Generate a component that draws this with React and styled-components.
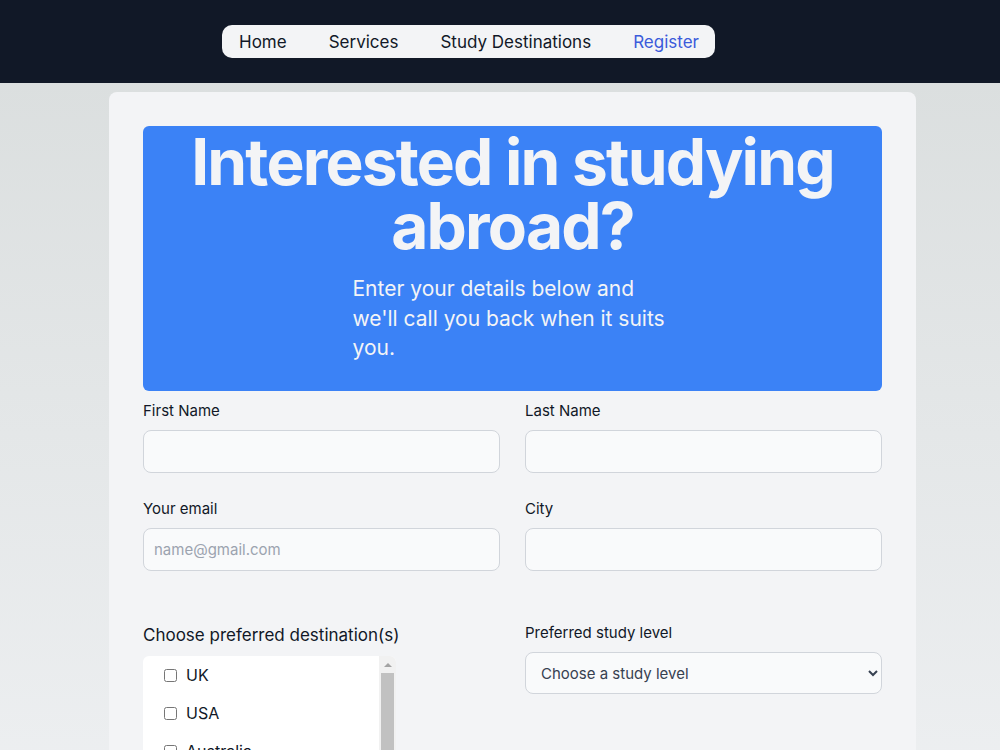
import React from 'react';
import styled, { createGlobalStyle } from 'styled-components';

const GlobalStyle = createGlobalStyle`
  html, body {
    margin: 0;
    padding: 0;
  }
  body {
    font-family: Inter, "Noto Sans", sans-serif;
    min-height: 750px;
    background: linear-gradient(180deg, #d9dddd 0%, #eef0f2 100%);
  }
`;

const Header = styled.header`
  height: 83px;
  background-color: #111827;
  display: flex;
  justify-content: center;
  align-items: flex-start;
  padding-top: 25px;
  box-sizing: border-box;
`;

const NavPill = styled.nav`
  display: flex;
  align-items: center;
  gap: 42px;
  height: 33px;
  padding: 0 16px 0 17px;
  margin-right: 63px;
  background-color: #f3f4f6;
  border-radius: 10px;
`;

const NavLink = styled.a`
  font-size: 17px;
  color: ${p => (p.$active ? '#3b5bdb' : '#111827')};
  text-decoration: none;
  cursor: pointer;
`;

const Main = styled.main`
  display: flex;
  justify-content: center;
  padding-top: 9px;
`;

const Card = styled.section`
  width: 807px;
  margin-left: 25px;
  background-color: #f3f4f6;
  border-radius: 8px;
  padding: 34px 34px 40px;
  box-sizing: border-box;
  min-height: 700px;
`;

const Banner = styled.div`
  background-color: #3b82f6;
  border-radius: 6px;
  height: 265px;
  padding-top: 4px;
  box-sizing: border-box;
  color: #f3f4f6;
`;

const Title = styled.h1`
  margin: 0;
  font-size: 64px;
  line-height: 64px;
  font-weight: 700;
  letter-spacing: -1.8px;
  text-align: center;
`;

const Lead = styled.p`
  margin: 16px auto 0;
  max-width: 320px;
  font-size: 21px;
  line-height: 29.5px;
`;

const FormGrid = styled.div`
  display: grid;
  grid-template-columns: 1fr 1fr;
  column-gap: 25px;
  row-gap: 26px;
  margin-top: 10px;
`;

const Field = styled.div`
  display: flex;
  flex-direction: column;
  margin-top: ${p => p.$top || 0}px;
`;

const Label = styled.label`
  font-size: ${p => p.$size || 15}px;
  line-height: 20px;
  color: #111827;
  margin-bottom: ${p => p.$gap || 9}px;
`;

const Input = styled.input`
  height: 43px;
  box-sizing: border-box;
  border: 1px solid #d1d5db;
  border-radius: 8px;
  background-color: #f9fafb;
  padding: 0 10px;
  font-family: inherit;
  font-size: 15px;
  color: #111827;
  outline: none;

  &::placeholder {
    color: #9ca3af;
  }
`;

const Select = styled.select`
  height: 42px;
  box-sizing: border-box;
  border: 1px solid #d1d5db;
  border-radius: 8px;
  background-color: #f9fafb;
  padding: 0 10px 0 11px;
  font-family: inherit;
  font-size: 15px;
  color: #374151;
  outline: none;
`;

const CheckBox = styled.div`
  display: flex;
  width: 253px;
  height: 130px;
  background-color: #ffffff;
  border-radius: 6px 6px 0 0;
  overflow: hidden;
`;

const CheckItems = styled.div`
  flex: 1;
  overflow: hidden;
`;

const ScrollTrack = styled.div`
  width: 17px;
  display: flex;
  flex-direction: column;
  align-items: center;
  background-color: #f1f1f1;
`;

const ScrollArrow = styled.div`
  height: 17px;
  display: flex;
  align-items: center;
  justify-content: center;

  &::before {
    content: '';
    border-left: 4px solid transparent;
    border-right: 4px solid transparent;
    border-bottom: 4px solid #a3a3a3;
  }
`;

const ScrollThumb = styled.div`
  width: 13px;
  flex: 1;
  background-color: #c1c1c1;
`;

const CheckRow = styled.label`
  display: flex;
  align-items: center;
  gap: 9px;
  height: 38px;
  padding-left: 21px;
  font-size: 16px;
  color: #111827;

  & > input {
    width: 13px;
    height: 13px;
    margin: 0;
  }
`;

const destinations = ['UK', 'USA', 'Australia', 'Canada', 'Ireland', 'Germany', 'New Zealand'];

const App = () => {
  return (
    <>
      <GlobalStyle />
      <Header>
        <NavPill>
          <NavLink>Home</NavLink>
          <NavLink>Services</NavLink>
          <NavLink>Study Destinations</NavLink>
          <NavLink $active>Register</NavLink>
        </NavPill>
      </Header>
      <Main>
        <Card>
          <Banner>
            <Title>Interested in studying<br />abroad?</Title>
            <Lead>Enter your details below and we'll call you back when it suits you.</Lead>
          </Banner>
          <FormGrid>
            <Field>
              <Label>First Name</Label>
              <Input type="text" />
            </Field>
            <Field>
              <Label>Last Name</Label>
              <Input type="text" />
            </Field>
            <Field>
              <Label>Your email</Label>
              <Input type="email" placeholder="name@gmail.com" />
            </Field>
            <Field>
              <Label>City</Label>
              <Input type="text" />
            </Field>
            <Field $top={28}>
              <Label $size={17} $gap={11}>Choose preferred destination(s)</Label>
              <CheckBox>
                <CheckItems>
                  {destinations.map(d => (
                    <CheckRow key={d}>
                      <input type="checkbox" />
                      {d}
                    </CheckRow>
                  ))}
                </CheckItems>
                <ScrollTrack>
                  <ScrollArrow />
                  <ScrollThumb />
                </ScrollTrack>
              </CheckBox>
            </Field>
            <Field $top={26}>
              <Label $gap={9}>Preferred study level</Label>
              <Select defaultValue="">
                <option value="" disabled>Choose a study level</option>
                <option>Undergraduate</option>
                <option>Postgraduate</option>
                <option>PhD</option>
              </Select>
            </Field>
          </FormGrid>
        </Card>
      </Main>
    </>
  );
};

export default App;
